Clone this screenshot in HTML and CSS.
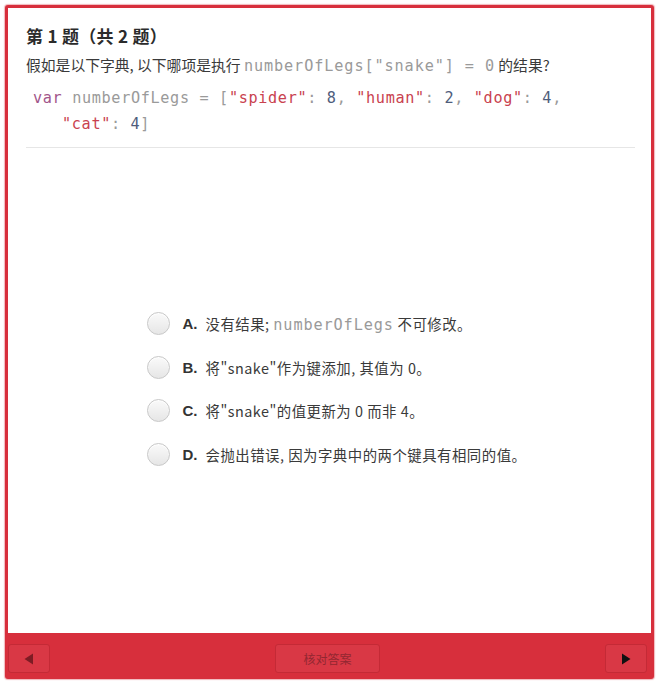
FILE: index.html
```html
<!DOCTYPE html>
<html lang="zh">
<head>
<meta charset="utf-8">
<link rel="stylesheet" href="styles.css">
</head>
<body>
<div class="card">
  <div class="panel">
    <div class="head">
      <div class="title">第 1 题（共 2 题）</div>
      <div class="sub">假如是以下字典, 以下哪项是执行 <span class="mono gray">numberOfLegs["snake"] = 0</span> 的结果?</div>
      <div class="code">
        <div class="line"><span class="kw">var</span> <span class="gray">numberOfLegs</span> <span class="gray">= [</span><span class="str">"spider"</span><span class="gray">:</span> <span class="num">8</span><span class="gray">,</span> <span class="str">"human"</span><span class="gray">:</span> <span class="num">2</span><span class="gray">,</span> <span class="str">"dog"</span><span class="gray">:</span> <span class="num">4</span><span class="gray">,</span></div>
        <div class="line indent"><span class="str">"cat"</span><span class="gray">:</span> <span class="num">4</span><span class="gray">]</span></div>
      </div>
      <div class="divider"></div>
    </div>
    <div class="options">
      <div class="opt"><span class="radio"></span><span class="letter">A.</span><span class="txt">没有结果; <span class="mono gray">numberOfLegs</span> 不可修改。</span></div>
      <div class="opt"><span class="radio"></span><span class="letter">B.</span><span class="txt">将"snake"作为键添加, 其值为 0。</span></div>
      <div class="opt"><span class="radio"></span><span class="letter">C.</span><span class="txt">将"snake"的值更新为 0 而非 4。</span></div>
      <div class="opt"><span class="radio"></span><span class="letter">D.</span><span class="txt">会抛出错误, 因为字典中的两个键具有相同的值。</span></div>
    </div>
  </div>
  <div class="footer">
    <button class="btn nav prev"><svg width="10" height="12" viewBox="0 0 10 12"><path d="M9 0.5 L0.5 6 L9 11.5 Z" fill="#7d1c24"/></svg></button>
    <button class="btn check">核对答案</button>
    <button class="btn nav next"><svg width="10" height="12" viewBox="0 0 10 12"><path d="M1 0.5 L9.5 6 L1 11.5 Z" fill="#111"/></svg></button>
  </div>
</div>
</body>
</html>
```

FILE: styles.css
```css
html, body {
  margin: 0;
  padding: 0;
  background: #fff;
}
body {
  padding: 5px 4px 2px 5px;
  font-family: "Noto Sans CJK SC", "Noto Sans", sans-serif;
  color: #333;
}
.card {
  background: #d72f3c;
  border-radius: 3px;
  padding: 3px 3px 0 3px;
  height: 671px;
  display: flex;
  flex-direction: column;
  box-shadow: 0 0 1px 1px rgba(215, 47, 60, 0.35);
}
.panel {
  background: #fff;
  flex: 1;
  display: flex;
  flex-direction: column;
}
.head {
  padding: 16px 16px 0 18px;
}
.title {
  font-size: 17px;
  font-weight: bold;
  line-height: 24px;
  color: #2b2b2b;
  letter-spacing: 0.3px;
}
.sub {
  margin-top: 6px;
  font-size: 14.8px;
  line-height: 22px;
  color: #3a3a3a;
}
.mono {
  font-family: "DejaVu Sans Mono", "Liberation Mono", monospace;
  font-size: 15.2px;
  letter-spacing: 0.9px;
}
.gray { color: #9a9a9a; }
.code {
  margin-top: 8px;
  padding-left: 7px;
  font-family: "DejaVu Sans Mono", "Liberation Mono", monospace;
  font-size: 15.2px;
  letter-spacing: 0.65px;
  line-height: 26px;
}
.line.indent { padding-left: 29px; }
.kw { color: #a2558a; }
.str { color: #c9424f; }
.num { color: #4f5d7c; }
.divider {
  margin-top: 10px;
  height: 1px;
  background: #e6e6e6;
}
.options {
  flex: 1;
  display: flex;
  flex-direction: column;
  justify-content: center;
  align-items: center;
  gap: 20.7px;
  padding-left: 6px;
  padding-bottom: 3px;
}
.opt {
  display: flex;
  align-items: center;
  width: 372px;
  height: 23.3px;
  font-size: 14.4px;
  color: #3a3a3a;
}
.radio {
  width: 21px;
  height: 21px;
  border-radius: 50%;
  border: 1px solid #c8c8c8;
  background: linear-gradient(#fafafa, #e6e6e6);
  box-shadow: inset 0 1px 1px #fff;
  flex: none;
}
.letter {
  font-family: "Liberation Sans", "Noto Sans", sans-serif;
  font-weight: bold;
  font-size: 15px;
  margin-left: 13px;
  width: 23px;
  flex: none;
  color: #333;
}
.txt { white-space: nowrap; letter-spacing: 0.5px; }
.footer {
  height: 46px;
  display: flex;
  justify-content: space-between;
  align-items: flex-start;
  padding-top: 11px;
  padding-right: 4px;
  box-sizing: border-box;
}
.btn {
  background: #d93845;
  border: 1px solid #c42a36;
  border-radius: 3px;
  height: 29px;
  padding: 0;
  display: flex;
  align-items: center;
  justify-content: center;
  font-family: "Noto Sans CJK SC", sans-serif;
}
.nav { width: 42px; }
.check {
  width: 105px;
  font-size: 12px;
  color: #922731;
}
```
